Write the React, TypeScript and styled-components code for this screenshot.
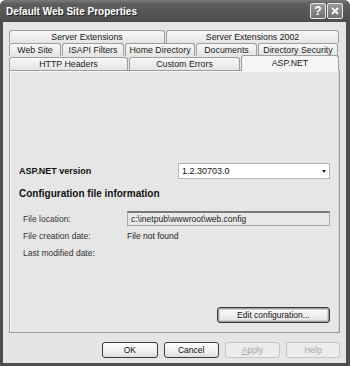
import styled, { createGlobalStyle } from 'styled-components';

const GlobalStyle = createGlobalStyle`
  html, body {
    margin: 0;
    padding: 0;
    background: #ffffff;
  }
  body {
    font-family: 'Liberation Sans', Arial, sans-serif;
    font-size: 8.5px;
    color: #111;
  }
`;

const Window = styled.div`
  width: 350px;
  height: 366px;
  box-sizing: border-box;
  display: flex;
  flex-direction: column;
  background: #4e4e4e;
  border-radius: 6px 6px 0 0;
  overflow: hidden;
`;

const TitleBar = styled.div`
  height: 22px;
  flex-shrink: 0;
  display: flex;
  align-items: center;
  padding: 0 7px 0 6px;
  background: linear-gradient(#7a7a7a 0%, #5e5e5e 18%, #555555 60%, #4c4c4c 100%);
`;

const Title = styled.div`
  flex: 1;
  color: #ffffff;
  font-weight: bold;
  font-size: 10px;
  text-shadow: 1px 1px 0 #2a2a2a;
`;

const TitleButton = styled.div`
  width: 14px;
  height: 14px;
  margin-left: 1px;
  border: 1px solid #e8e8e8;
  border-radius: 2px;
  background: linear-gradient(#9a9a9a, #707070);
  color: #ffffff;
  display: flex;
  align-items: center;
  justify-content: center;
  font-weight: bold;
  font-size: 12px;
`;

const Body = styled.div`
  flex: 1;
  margin: 0 4px 3px 3px;
  padding: 8px 6px 0 6px;
  background: #e5e5e5;
  display: flex;
  flex-direction: column;
`;

const TabRow = styled.div<{ h: number }>`
  display: flex;
  height: ${({ h }) => h}px;
  align-items: flex-end;
  gap: 1px;
  padding-right: 1px;
`;

const Tab = styled.div<{ w: number; selected?: boolean }>`
  width: ${({ w }) => w}px;
  height: ${({ selected }) => (selected ? '16px' : '13px')};
  box-sizing: border-box;
  border: 1px solid #9e9e9e;
  border-bottom: none;
  border-radius: 3px 3px 0 0;
  background: ${({ selected }) =>
    selected ? '#f5f5f5' : 'linear-gradient(#f8f8f8, #e4e4e4)'};
  display: flex;
  align-items: center;
  justify-content: center;
  font-size: 8.8px;
  color: #1a1a1a;
  white-space: nowrap;
  position: relative;
  z-index: ${({ selected }) => (selected ? 2 : 1)};
  margin-bottom: ${({ selected }) => (selected ? '-1px' : '0')};
  padding-bottom: ${({ selected }) => (selected ? '2px' : '0')};
`;

const Panel = styled.div`
  width: 331px;
  height: 263px;
  box-sizing: border-box;
  border: 1px solid #9e9e9e;
  box-shadow: inset 1px 1px 0 #f6f6f6, inset -1px 0 0 #cfcfcf;
  background: #e6e6e6;
  display: flex;
  flex-direction: column;
  padding: 92px 9px 9px 9px;
`;

const VersionRow = styled.div`
  display: flex;
  align-items: center;
  justify-content: space-between;
  height: 16px;
`;

const BoldLabel = styled.div<{ size: number }>`
  font-weight: bold;
  font-size: ${({ size }) => size}px;
  color: #111;
`;

const Select = styled.div`
  width: 152px;
  height: 16px;
  box-sizing: border-box;
  border: 1px solid #b4b4b4;
  background: #ffffff;
  display: flex;
  align-items: center;
  padding-left: 3px;
  font-size: 9px;
`;

const SelectText = styled.span`
  flex: 1;
`;

const Arrow = styled.span`
  width: 10px;
  display: flex;
  justify-content: center;
  &::after {
    content: '';
    border-left: 2.5px solid transparent;
    border-right: 2.5px solid transparent;
    border-top: 3px solid #222;
  }
`;

const SectionTitle = styled(BoldLabel)`
  margin-top: 9px;
`;

const InfoGrid = styled.div`
  display: grid;
  grid-template-columns: 104px 1fr;
  grid-auto-rows: 17px;
  margin-top: 11px;
  padding-left: 4px;
  align-items: center;
  color: #222;
`;

const InfoLabel = styled.div`
  color: #333;
`;

const ReadOnlyBox = styled.div`
  height: 15px;
  box-sizing: border-box;
  border: 1px solid #a8a8a8;
  border-top: 2px solid #7a7a7a;
  background: #e9e9e9;
  display: flex;
  align-items: center;
  padding-left: 3px;
`;

const Spacer = styled.div`
  flex: 1;
`;

const ButtonRow = styled.div<{ justify: string }>`
  display: flex;
  justify-content: ${({ justify }) => justify};
  gap: 6px;
`;

const Button = styled.div<{ w: number; disabled?: boolean; focused?: boolean }>`
  width: ${({ w }) => w}px;
  height: 16px;
  box-sizing: border-box;
  border: 1px solid ${({ disabled }) => (disabled ? '#c6c6c6' : '#3c3c3c')};
  border-radius: 3px;
  background: ${({ disabled }) =>
    disabled ? '#ececec' : 'linear-gradient(#fdfdfd, #ececec 70%, #dcdcdc)'};
  color: ${({ disabled }) => (disabled ? '#a8a8a8' : '#111')};
  box-shadow: ${({ focused }) =>
    focused ? 'inset 0 0 0 1px #9a9a9a, inset 0 0 0 2px #d0d0d0' : 'none'};
  display: flex;
  align-items: center;
  justify-content: center;
`;

const Footer = styled.div`
  padding: 9px 0 0 93px;
`;

export default function App() {
  return (
    <>
      <GlobalStyle />
      <Window>
        <TitleBar>
          <Title>Default Web Site Properties</Title>
          <TitleButton>?</TitleButton>
          <TitleButton>
            <svg width="10" height="10" viewBox="0 0 10 10">
              <path d="M2 2 L8 8 M8 2 L2 8" stroke="#fff" strokeWidth="1.8" />
            </svg>
          </TitleButton>
        </TitleBar>
        <Body>
          <TabRow h={13}>
            <Tab w={156}>Server Extensions</Tab>
            <Tab w={173}>Server Extensions 2002</Tab>
          </TabRow>
          <TabRow h={13}>
            <Tab w={52}>Web Site</Tab>
            <Tab w={62}>ISAPI Filters</Tab>
            <Tab w={70}>Home Directory</Tab>
            <Tab w={61}>Documents</Tab>
            <Tab w={80}>Directory Security</Tab>
          </TabRow>
          <TabRow h={14}>
            <Tab w={119}>HTTP Headers</Tab>
            <Tab w={111}>Custom Errors</Tab>
            <Tab w={98} selected>
              ASP.NET
            </Tab>
          </TabRow>
          <Panel>
            <VersionRow>
              <BoldLabel size={9}>ASP.NET version</BoldLabel>
              <Select>
                <SelectText>1.2.30703.0</SelectText>
                <Arrow />
              </Select>
            </VersionRow>
            <SectionTitle size={10}>Configuration file information</SectionTitle>
            <InfoGrid>
              <InfoLabel>File location:</InfoLabel>
              <ReadOnlyBox>c:\inetpub\wwwroot\web.config</ReadOnlyBox>
              <InfoLabel>File creation date:</InfoLabel>
              <div>File not found</div>
              <InfoLabel>Last modified date:</InfoLabel>
              <div />
            </InfoGrid>
            <Spacer />
            <ButtonRow justify="flex-end">
              <Button w={113} focused>
                Edit configuration...
              </Button>
            </ButtonRow>
          </Panel>
          <Footer>
            <ButtonRow justify="flex-start">
              <Button w={56}>OK</Button>
              <Button w={55}>Cancel</Button>
              <Button w={56} disabled>
                <u>A</u>pply
              </Button>
              <Button w={54} disabled>
                Help
              </Button>
            </ButtonRow>
          </Footer>
        </Body>
      </Window>
    </>
  );
}
